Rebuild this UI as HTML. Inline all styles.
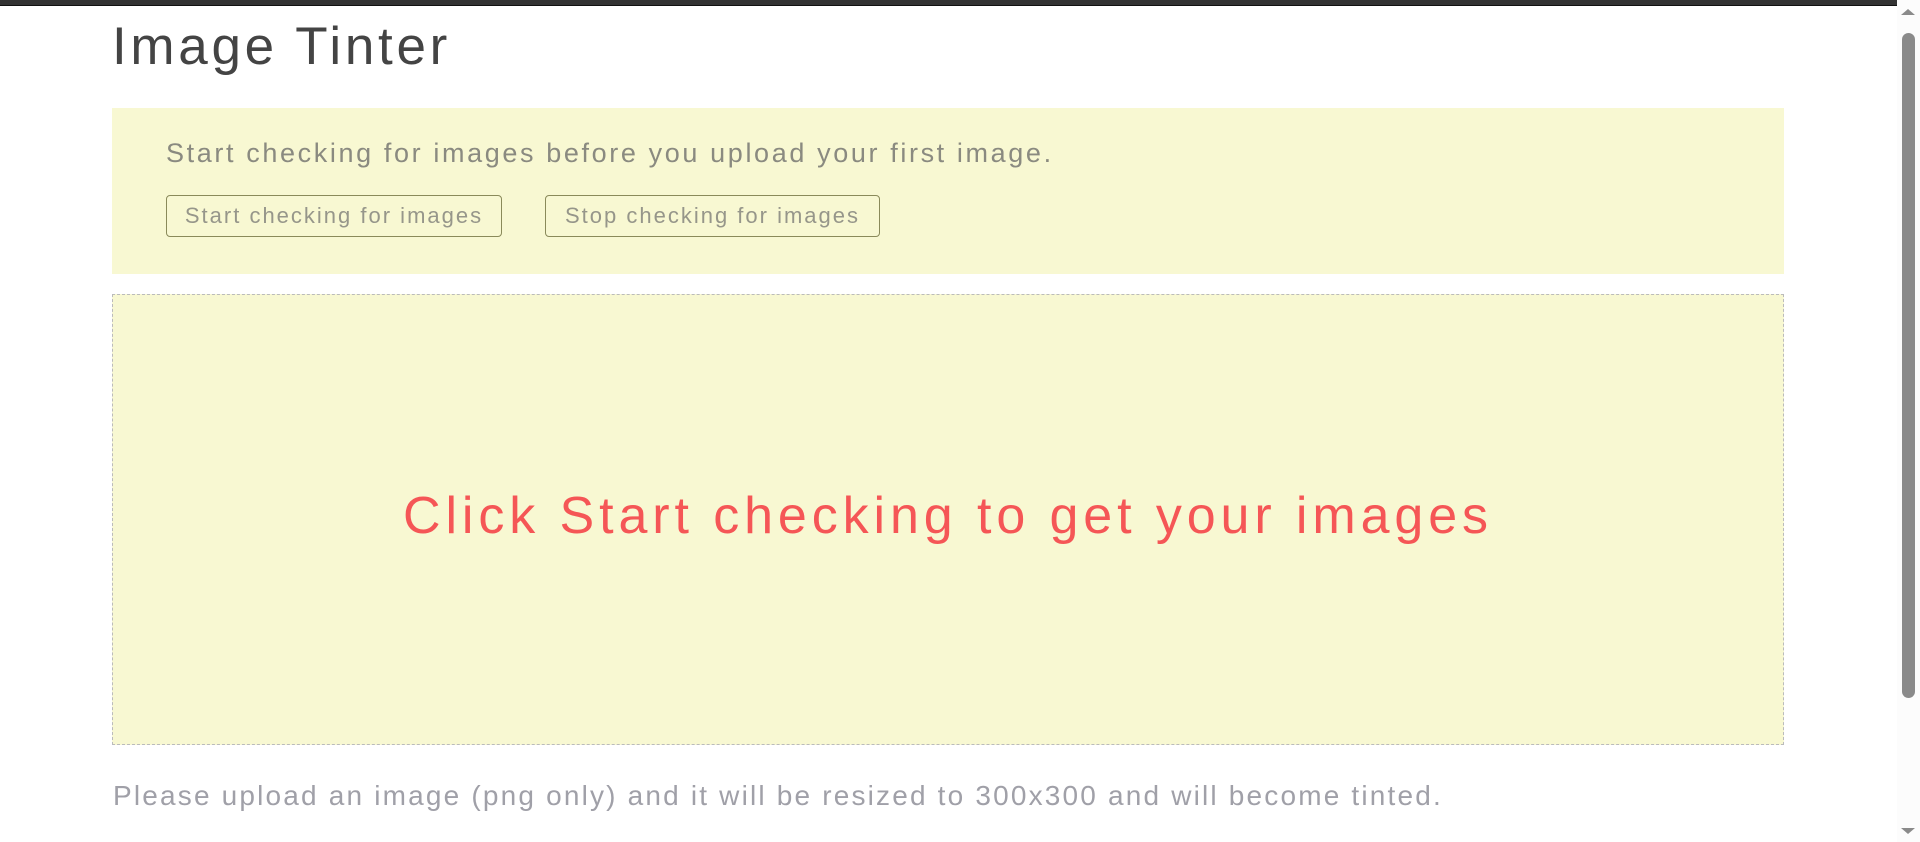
<!DOCTYPE html>
<html><head><meta charset="utf-8"><style>
html,body{margin:0;padding:0;width:1920px;height:842px;overflow:hidden;background:#fff;font-family:"Liberation Sans",sans-serif}
.top{position:absolute;left:0;top:0;width:1920px;height:5px;background:#333;border-bottom:1px solid #111}
.title{position:absolute;left:112px;top:17px;font-size:53px;color:#444;letter-spacing:3.7px;line-height:60px;font-weight:300}
.b1{position:absolute;left:112px;top:108px;width:1672px;height:166px;background:#f8f8d2}
.p1{position:absolute;left:54px;top:29px;font-size:27px;color:#8a8a80;letter-spacing:2.62px;white-space:nowrap;line-height:32px}
.btn{position:absolute;top:87px;height:42px;border:1px solid #8a8a5a;border-radius:4px;box-sizing:border-box;font-size:22px;color:#96968a;line-height:40px;text-align:center;white-space:nowrap;letter-spacing:2.0px}
.b2{position:absolute;left:112px;top:294px;width:1672px;height:451px;box-sizing:border-box;background:#f8f8d2;border:1px dashed #bbb}
.c{position:absolute;left:0;right:0;top:191px;text-align:center;font-size:52px;color:#f55656;letter-spacing:4.9px;line-height:60px;white-space:nowrap}
.p2{position:absolute;left:113px;top:779px;font-size:28px;color:#a0a0a8;letter-spacing:2.18px;white-space:nowrap;line-height:34px}
.sb{position:absolute;left:1897px;top:0;width:23px;height:842px;background:#fcfcfc}
.th{position:absolute;left:1902px;top:33px;width:13px;height:665px;background:#8a8a8a;border-radius:7px}
.au{position:absolute;left:1901px;top:9px;width:0;height:0;border-left:7px solid transparent;border-right:7px solid transparent;border-bottom:6px solid #8a8a8a}
.ad{position:absolute;left:1901px;top:828px;width:0;height:0;border-left:7px solid transparent;border-right:7px solid transparent;border-top:6px solid #8a8a8a}
</style></head><body>
<div class="top"></div>
<div class="title">Image Tinter</div>
<div class="b1">
<div class="p1">Start checking for images before you upload your first image.</div>
<div class="btn" style="left:54px;width:336px">Start checking for images</div>
<div class="btn" style="left:433px;width:335px">Stop checking for images</div>
</div>
<div class="b2"><div class="c">Click Start checking to get your images</div></div>
<div class="p2">Please upload an image (png only) and it will be resized to 300x300 and will become tinted.</div>
<div class="sb"></div><div class="th"></div><div class="au"></div><div class="ad"></div>
</body></html>
